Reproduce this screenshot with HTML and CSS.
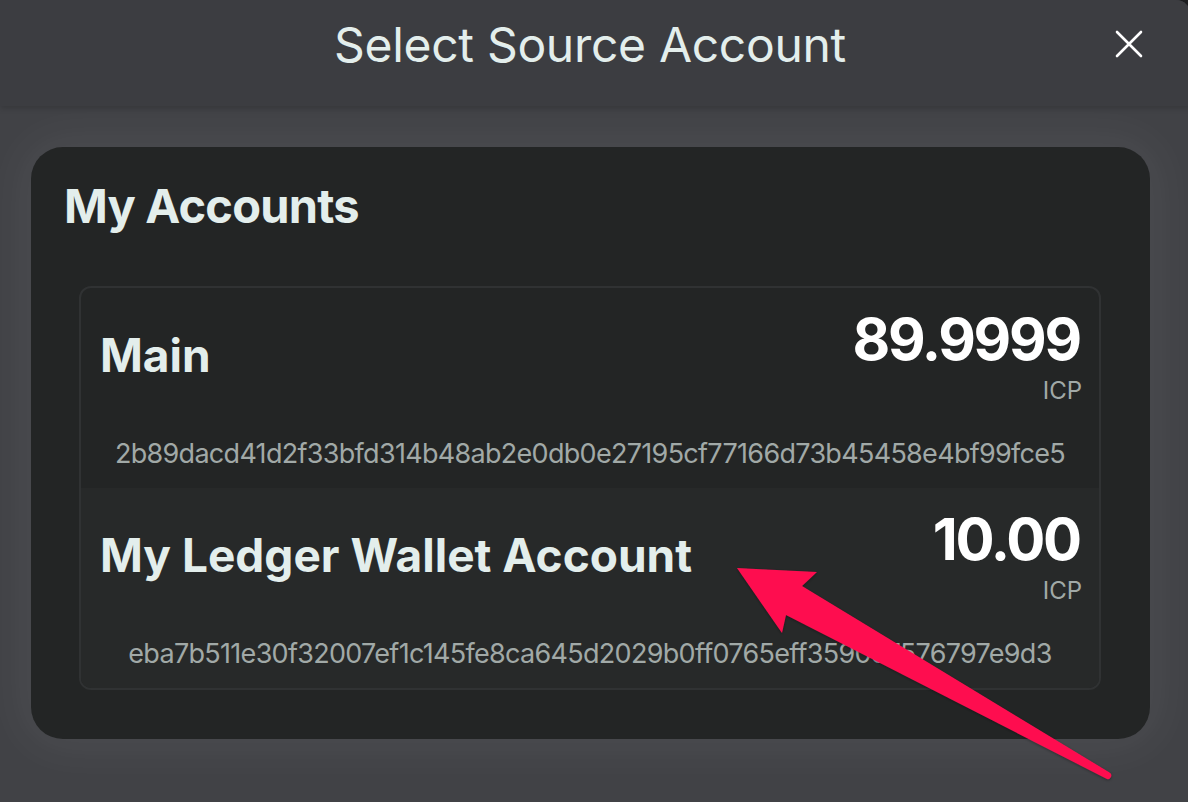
FILE: index.html
```html
<!DOCTYPE html>
<html lang="en">
<head>
<meta charset="utf-8">
<title>Select Source Account</title>
<link rel="stylesheet" href="styles.css">
</head>
<body>
<div class="modal">
  <header class="modal-header">
    <span class="spacer"></span>
    <h1 class="modal-title">Select Source Account</h1>
    <button class="close-btn" aria-label="Close">
      <svg width="28" height="28" viewBox="0 0 28 28" fill="none">
        <path d="M2 2 L26 26 M26 2 L2 26" stroke="#ffffff" stroke-width="2.6" stroke-linecap="round"/>
      </svg>
    </button>
  </header>
  <main class="modal-body">
    <section class="card">
      <h2 class="card-title">My Accounts</h2>
      <div class="account-list">
        <div class="account">
          <div class="account-top">
            <div class="account-name">Main</div>
            <div class="account-balance">
              <div class="amount">89.9999</div>
              <div class="unit">ICP</div>
            </div>
          </div>
          <div class="account-id">2b89dacd41d2f33bfd314b48ab2e0db0e27195cf77166d73b45458e4bf99fce5</div>
        </div>
        <div class="account account-alt">
          <div class="account-top">
            <div class="account-name">My Ledger Wallet Account</div>
            <div class="account-balance">
              <div class="amount">10.00</div>
              <div class="unit">ICP</div>
            </div>
          </div>
          <div class="account-id">eba7b511e30f32007ef1c145fe8ca645d2029b0ff0765eff3590c7576797e9d3</div>
        </div>
      </div>
    </section>
  </main>
</div>
<svg class="annotation" width="1188" height="802" viewBox="0 0 1188 802">
  <defs>
    <filter id="sh" x="-10%" y="-10%" width="120%" height="120%">
      <feDropShadow dx="0" dy="1" stdDeviation="1.5" flood-color="#000" flood-opacity="0.35"/>
    </filter>
  </defs>
  <path filter="url(#sh)" fill="#fe0f50" d="M737 568 L817 572 L802 586 L1109.5 772.5 A3.4 3.4 0 0 1 1106 778.5 L786 615 L782 633 Z"/>
</svg>
</body>
</html>
```
FILE: styles.css
```css
* { box-sizing: border-box; }
html, body { margin: 0; padding: 0; }
body {
  width: 1188px;
  height: 802px;
  overflow: hidden;
  background: #1d1e20;
  font-family: Inter, "Noto Sans", sans-serif;
  position: relative;
}
.modal {
  width: 1190px;
  height: 802px;
  background: #414246;
  border-top-right-radius: 14px;
  overflow: hidden;
  display: flex;
  flex-direction: column;
}
.modal-header {
  height: 106px;
  flex: none;
  background: #3c3d41;
  display: grid;
  grid-template-columns: 1fr auto 1fr;
  align-items: start;
  padding: 21px 10px 0 0;
  box-shadow: 0 2px 6px rgba(0, 0, 0, 0.18);
  position: relative;
  z-index: 1;
}
.modal-title {
  margin: 0;
  font-size: 48px;
  line-height: 1;
  font-weight: 400;
  letter-spacing: -0.3px;
  color: #e3eeec;
  white-space: nowrap;
}
.close-btn {
  justify-self: end;
  margin: 9px 37px 0 0;
  padding: 0;
  border: 0;
  background: none;
  width: 28px;
  height: 28px;
  display: flex;
}
.modal-body {
  flex: 1;
  padding: 41px 40px 0 31px;
}
.card {
  width: 1119px;
  background: #232525;
  border-radius: 32px;
  padding: 35px 49px 49px 48px;
  box-shadow: 0 0 46px 10px rgba(255, 255, 255, 0.06);
}
.card-title {
  margin: 0 0 57px -15px;
  font-size: 47px;
  line-height: 1;
  font-weight: 700;
  letter-spacing: -0.8px;
  color: #e3eeec;
}
.account-list {
  border: 2px solid #303233;
  border-radius: 12px;
  overflow: hidden;
}
.account {
  padding: 22px 19px 21px 19px;
  display: flex;
  flex-direction: column;
}
.account-alt {
  background: #272929;
}
.account-top {
  display: flex;
  justify-content: space-between;
  align-items: center;
}
.account-name {
  font-size: 46px;
  line-height: 1;
  font-weight: 700;
  color: #e3eeec;
  margin-bottom: 4px;
}
.account-balance {
  display: flex;
  flex-direction: column;
  align-items: flex-end;
}
.amount {
  font-size: 58px;
  line-height: 1;
  font-weight: 700;
  letter-spacing: -2.2px;
  color: #ffffff;
}
.unit {
  margin-top: 11px;
  font-size: 24px;
  line-height: 1;
  margin-right: -2px;
  color: #a1a9a7;
}
.account-id {
  margin-top: 37px;
  font-size: 27px;
  line-height: 1;
  letter-spacing: -0.7px;
  color: #a1a9a7;
  text-align: center;
  white-space: nowrap;
}
.annotation {
  position: absolute;
  left: 0;
  top: 0;
  pointer-events: none;
}
```
